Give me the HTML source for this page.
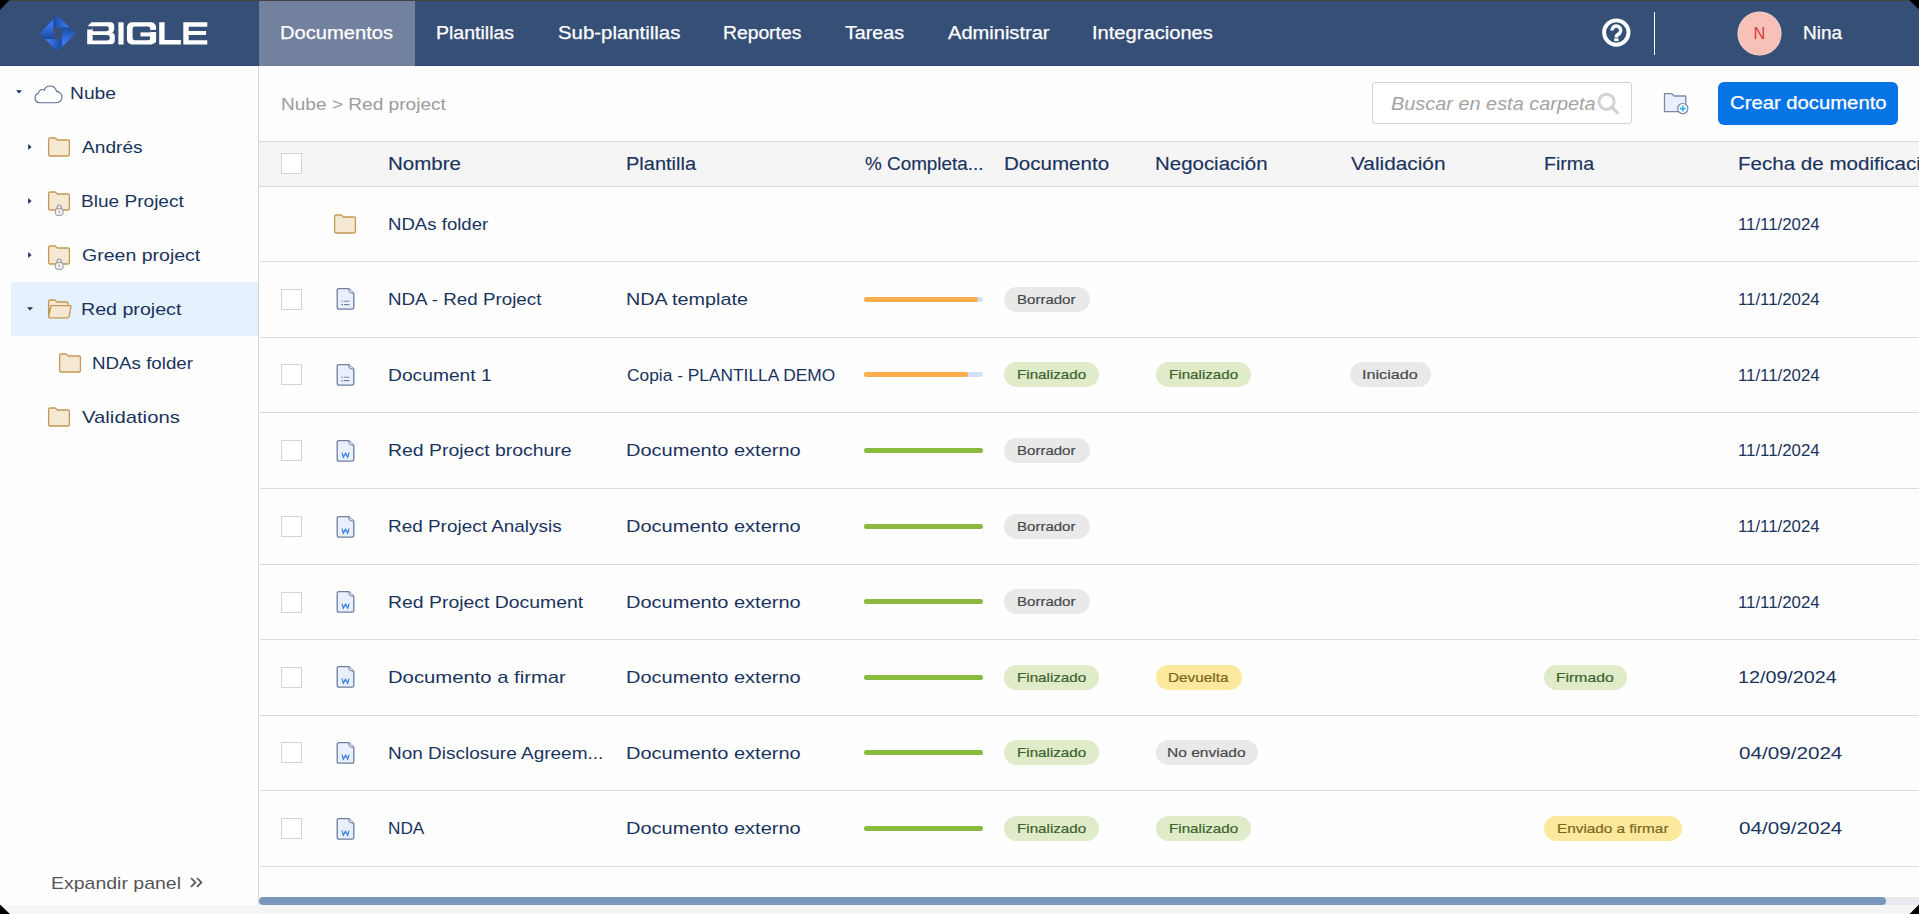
<!DOCTYPE html>
<html><head><meta charset="utf-8"><title>Bigle</title>
<style>
html,body{margin:0;padding:0;}
body{width:1919px;height:914px;overflow:hidden;position:relative;background:#fefefe;font-family:"Liberation Sans",sans-serif;}
.t{position:absolute;white-space:nowrap;}
.r{position:absolute;box-sizing:content-box;}
svg.r{display:block;overflow:visible;}
</style></head><body>
<div class="r" style="left:0px;top:0px;width:1919px;height:1px;background:#44453f;"></div>
<div class="r" style="left:0px;top:1px;width:1919px;height:65px;background:#364f77;"></div>
<div class="r" style="left:0px;top:65px;width:1919px;height:1px;background:#2e4671;"></div>
<div class="r" style="left:259px;top:1px;width:156px;height:65px;background:#71819e;"></div>
<svg class="r" style="left:38px;top:14px" width="40" height="40" viewBox="38 14 40 40">
<defs>
<clipPath id="dm"><rect x="-12.83" y="-12.83" width="25.66" height="25.66" rx="3.2" transform="translate(57.45 33.4) rotate(45)"/></clipPath>
<linearGradient id="gT" gradientUnits="userSpaceOnUse" x1="53.3" y1="0" x2="67" y2="0"><stop offset="0" stop-color="#174a9e"/><stop offset="1" stop-color="#3b76f2"/></linearGradient>
<linearGradient id="gL" gradientUnits="userSpaceOnUse" x1="0" y1="24" x2="0" y2="39"><stop offset="0" stop-color="#3b76f2"/><stop offset="1" stop-color="#174a9e"/></linearGradient>
<linearGradient id="gB" gradientUnits="userSpaceOnUse" x1="48" y1="0" x2="61.8" y2="0"><stop offset="0" stop-color="#3b76f2"/><stop offset="1" stop-color="#174a9e"/></linearGradient>
<linearGradient id="gR" gradientUnits="userSpaceOnUse" x1="0" y1="27.6" x2="0" y2="42"><stop offset="0" stop-color="#174a9e"/><stop offset="1" stop-color="#3b76f2"/></linearGradient>
</defs>
<g clip-path="url(#dm)">
<rect x="53.3" y="14" width="25" height="13.6" fill="url(#gT)"/>
<rect x="38" y="14" width="15.3" height="25" fill="url(#gL)"/>
<rect x="38" y="39" width="23.8" height="15" fill="url(#gB)"/>
<rect x="61.8" y="27.6" width="16.2" height="26.4" fill="url(#gR)"/>
</g></svg>
<svg class="r" style="left:80px;top:16px" width="135" height="34" viewBox="80 16 135 34">
<g fill="#fff">
<path d="M91.35 22.2 H110.2 Q114.2 22.2 114.2 26.2 V29.4 Q114.2 31.6 112.2 32.4 Q114.8 33.2 114.8 36 V40.2 Q114.8 44.3 110.8 44.3 H87.2 V29.45 H92.7 V26.35 H87.66 Z"/>
<rect x="118.4" y="22.3" width="5.2" height="22.2"/>
<rect x="126.95" y="22.2" width="29.1" height="22.3" rx="5"/>
<path d="M159.2 22.3 H164.6 V40.1 H180.9 V44.4 H159.2 Z"/>
<path d="M183.3 22.3 H207.3 V26.7 H188.7 V31 H206.1 V35.1 H188.7 V40.2 H207.3 V44.4 H183.3 Z"/>
</g>
<g fill="#364f77">
<path d="M92.7 26.35 H106.6 Q108.9 26.35 108.9 28.8 Q108.9 31.2 106.6 31.2 H92.7 Z"/>
<path d="M92.6 35.1 H107.2 Q109.8 35.1 109.8 37.75 Q109.8 40.4 107.2 40.4 H92.6 Z"/>
<rect x="132.6" y="26.6" width="17.7" height="13.6" rx="2.5"/>
<rect x="150.3" y="29.9" width="6.5" height="2.5"/>
</g>
<rect x="140.5" y="32.4" width="15.54" height="4" fill="#fff"/>
<rect x="150.3" y="32.4" width="5.74" height="10" fill="#fff"/>
</svg>
<div class="t" id="t0" style="left:280.00px;top:24.36px;font-size:18px;line-height:18px;color:#ffffff;transform:scaleX(1.1195);transform-origin:0 0;-webkit-text-stroke:0.25px #ffffff;">Documentos</div>
<div class="t" id="t1" style="left:435.70px;top:24.36px;font-size:18px;line-height:18px;color:#ffffff;transform:scaleX(1.0840);transform-origin:0 0;-webkit-text-stroke:0.25px #ffffff;">Plantillas</div>
<div class="t" id="t2" style="left:557.80px;top:24.36px;font-size:18px;line-height:18px;color:#ffffff;transform:scaleX(1.1327);transform-origin:0 0;-webkit-text-stroke:0.25px #ffffff;">Sub-plantillas</div>
<div class="t" id="t3" style="left:722.80px;top:24.36px;font-size:18px;line-height:18px;color:#ffffff;transform:scaleX(1.0717);transform-origin:0 0;-webkit-text-stroke:0.25px #ffffff;">Reportes</div>
<div class="t" id="t4" style="left:845.00px;top:24.36px;font-size:18px;line-height:18px;color:#ffffff;transform:scaleX(1.0921);transform-origin:0 0;-webkit-text-stroke:0.25px #ffffff;">Tareas</div>
<div class="t" id="t5" style="left:947.50px;top:24.36px;font-size:18px;line-height:18px;color:#ffffff;transform:scaleX(1.1151);transform-origin:0 0;-webkit-text-stroke:0.25px #ffffff;">Administrar</div>
<div class="t" id="t6" style="left:1092.30px;top:24.36px;font-size:18px;line-height:18px;color:#ffffff;transform:scaleX(1.1180);transform-origin:0 0;-webkit-text-stroke:0.25px #ffffff;">Integraciones</div>
<svg class="r" style="left:1600px;top:17px" width="32" height="32" viewBox="0 0 32 32">
<circle cx="16.3" cy="15.6" r="12.2" fill="none" stroke="#fff" stroke-width="3.9"/>
<path d="M11.9 13.4 A4.4 4.4 0 1 1 19.3 16.6 Q16.4 18.2 16.4 19.8 V20.4" fill="none" stroke="#fff" stroke-width="3.5"/>
<rect x="14.2" y="21.3" width="4.3" height="2.9" fill="#fff"/>
</svg>
<div class="r" style="left:1654px;top:12px;width:1px;height:43px;background:#ffffff;"></div>
<div class="r" style="left:1738.3px;top:12.1px;width:42.6px;height:42.6px;border-radius:50%;background:#f8c1b8;box-shadow:0 0 0 0.5px #f4e6e4;"></div>
<div class="t" id="t7" style="left:1753.50px;top:24.90px;font-size:16.3px;line-height:16.3px;color:#d43a40;">N</div>
<div class="t" id="t8" style="left:1802.80px;top:25.09px;font-size:17.5px;line-height:17.5px;color:#fff;transform:scaleX(1.0834);transform-origin:0 0;-webkit-text-stroke:0.25px #fff;">Nina</div>
<div class="r" style="left:258px;top:66px;width:1px;height:839px;background:#d6d6d6;"></div>
<div class="r" style="left:11px;top:282px;width:247px;height:54px;background:#e5f1fd;"></div>
<svg class="r" style="left:15.2px;top:89.3px" width="8" height="6" viewBox="0 0 8 6"><path d="M1 1.2 H7 L4 4.6Z" fill="#1a335d"/></svg>
<svg class="r" style="left:33px;top:82px" width="31" height="23" viewBox="0 0 31 23">
<path d="M6.6 20.8 A4.9 4.9 0 0 1 5.6 11.2 A3.6 3.6 0 0 1 11.2 8.2 A6.3 6.3 0 0 1 23.4 9.4 A5.7 5.7 0 0 1 23.2 20.8 Z" fill="#fff" stroke="#5a6d94" stroke-width="1.1" stroke-linejoin="round"/>
</svg>
<div class="t" id="t9" style="left:70.25px;top:85.01px;font-size:17px;line-height:17px;color:#1a335d;transform:scaleX(1.1331);transform-origin:0 0;">Nube</div>
<svg class="r" style="left:27px;top:142.7px" width="6" height="8" viewBox="0 0 6 8"><path d="M1.2 1 V7 L4.6 4Z" fill="#1a335d"/></svg>
<svg class="r" style="left:47px;top:136.8px" width="24" height="24" viewBox="0 0 24 24"><path d="M1.6 2.4 Q1.6 1 3 1 H8.2 L10.4 3 H21 Q22.4 3 22.4 4.4 V17.6 Q22.4 19 21 19 H3 Q1.6 19 1.6 17.6 Z" fill="#f6e9d4" stroke="#c39853" stroke-width="1.3" stroke-linejoin="round"/></svg>
<div class="t" id="t10" style="left:81.50px;top:138.61px;font-size:17px;line-height:17px;color:#1a335d;transform:scaleX(1.1244);transform-origin:0 0;">Andrés</div>
<svg class="r" style="left:27px;top:196.7px" width="6" height="8" viewBox="0 0 6 8"><path d="M1.2 1 V7 L4.6 4Z" fill="#1a335d"/></svg>
<svg class="r" style="left:47px;top:190.8px" width="24" height="24" viewBox="0 0 24 24"><path d="M1.6 2.4 Q1.6 1 3 1 H8.2 L10.4 3 H21 Q22.4 3 22.4 4.4 V17.6 Q22.4 19 21 19 H3 Q1.6 19 1.6 17.6 Z" fill="#f6e9d4" stroke="#c39853" stroke-width="1.3" stroke-linejoin="round"/><path d="M10 18 V16.4 Q10 14.2 12.2 14.2 Q14.4 14.2 14.4 16.4 V18" fill="#f3f3f3" stroke="#a3a3a3" stroke-width="1.2"/><rect x="8.3" y="17.4" width="7.8" height="7" rx="3.2" fill="#f1f1f1" stroke="#a3a3a3" stroke-width="1.1"/><rect x="11.7" y="19.6" width="1" height="2.2" fill="#8a8a8a"/></svg>
<div class="t" id="t11" style="left:80.50px;top:192.61px;font-size:17px;line-height:17px;color:#1a335d;transform:scaleX(1.1217);transform-origin:0 0;">Blue Project</div>
<svg class="r" style="left:27px;top:250.7px" width="6" height="8" viewBox="0 0 6 8"><path d="M1.2 1 V7 L4.6 4Z" fill="#1a335d"/></svg>
<svg class="r" style="left:47px;top:244.8px" width="24" height="24" viewBox="0 0 24 24"><path d="M1.6 2.4 Q1.6 1 3 1 H8.2 L10.4 3 H21 Q22.4 3 22.4 4.4 V17.6 Q22.4 19 21 19 H3 Q1.6 19 1.6 17.6 Z" fill="#f6e9d4" stroke="#c39853" stroke-width="1.3" stroke-linejoin="round"/><path d="M10 18 V16.4 Q10 14.2 12.2 14.2 Q14.4 14.2 14.4 16.4 V18" fill="#f3f3f3" stroke="#a3a3a3" stroke-width="1.2"/><rect x="8.3" y="17.4" width="7.8" height="7" rx="3.2" fill="#f1f1f1" stroke="#a3a3a3" stroke-width="1.1"/><rect x="11.7" y="19.6" width="1" height="2.2" fill="#8a8a8a"/></svg>
<div class="t" id="t12" style="left:81.50px;top:246.61px;font-size:17px;line-height:17px;color:#1a335d;transform:scaleX(1.1484);transform-origin:0 0;">Green project</div>
<svg class="r" style="left:26px;top:305.5px" width="8" height="6" viewBox="0 0 8 6"><path d="M1 1.2 H7 L4 4.6Z" fill="#1a335d"/></svg>
<svg class="r" style="left:47px;top:298.5px" width="26" height="22" viewBox="0 0 26 22"><path d="M1.6 2.4 Q1.6 1 3 1 H7.8 L10 3 H19.6 Q21 3 21 4.4 V7 H3.8 L1.6 17.4 Z" fill="#f6e9d4" stroke="#c39853" stroke-width="1.3" stroke-linejoin="round"/><path d="M4.2 6.6 H23.4 Q24.2 6.6 24 7.6 L22 17.6 Q21.8 18.8 20.6 18.8 H2.8 Q1.6 18.8 1.8 17.6 L3.8 7.4 Q4 6.6 4.2 6.6 Z" fill="#f6e9d4" stroke="#c39853" stroke-width="1.3" stroke-linejoin="round"/></svg>
<div class="t" id="t13" style="left:80.50px;top:300.61px;font-size:17px;line-height:17px;color:#1a335d;transform:scaleX(1.1541);transform-origin:0 0;">Red project</div>
<svg class="r" style="left:58px;top:352.8px" width="24" height="24" viewBox="0 0 24 24"><path d="M1.6 2.4 Q1.6 1 3 1 H8.2 L10.4 3 H21 Q22.4 3 22.4 4.4 V17.6 Q22.4 19 21 19 H3 Q1.6 19 1.6 17.6 Z" fill="#f6e9d4" stroke="#c39853" stroke-width="1.3" stroke-linejoin="round"/></svg>
<div class="t" id="t14" style="left:91.50px;top:354.61px;font-size:17px;line-height:17px;color:#1a335d;transform:scaleX(1.1024);transform-origin:0 0;">NDAs folder</div>
<svg class="r" style="left:47px;top:406.8px" width="24" height="24" viewBox="0 0 24 24"><path d="M1.6 2.4 Q1.6 1 3 1 H8.2 L10.4 3 H21 Q22.4 3 22.4 4.4 V17.6 Q22.4 19 21 19 H3 Q1.6 19 1.6 17.6 Z" fill="#f6e9d4" stroke="#c39853" stroke-width="1.3" stroke-linejoin="round"/></svg>
<div class="t" id="t15" style="left:81.50px;top:408.61px;font-size:17px;line-height:17px;color:#1a335d;transform:scaleX(1.1953);transform-origin:0 0;">Validations</div>
<div class="t" id="t16" style="left:50.60px;top:875.41px;font-size:17px;line-height:17px;color:#555555;transform:scaleX(1.1466);transform-origin:0 0;">Expandir panel</div>
<svg class="r" style="left:188px;top:874px" width="18" height="16" viewBox="0 0 18 16">
<path d="M3 4 L7.4 8.4 L3 12.8 M9 4 L13.4 8.4 L9 12.8" fill="none" stroke="#555" stroke-width="1.7" stroke-linejoin="miter"/>
</svg>
<div class="r" style="left:0px;top:905px;width:1919px;height:9px;background:#f5f5f5;"></div>
<div class="r" style="left:259px;top:897px;width:1660px;height:8px;background:#e7e9ee;border-radius:4px 0 0 4px"></div>
<div class="r" style="left:259px;top:897px;width:1627px;height:8px;background:#7996bd;border-radius:4px"></div>
<div class="t" id="t17" style="left:280.70px;top:96.36px;font-size:17px;line-height:17px;color:#9b9b9b;transform:scaleX(1.1216);transform-origin:0 0;">Nube &gt; Red project</div>
<div class="r" style="left:1372px;top:82px;width:258px;height:40px;border:1px solid #d2d2d2;border-radius:3px;background:#fff"></div>
<div class="t" id="t18" style="left:1390.80px;top:96.29px;font-size:17.5px;line-height:17.5px;color:#a3a3a3;font-style:italic;transform:scaleX(1.1369);transform-origin:0 0;">Buscar en esta carpeta</div>
<svg class="r" style="left:1594px;top:89px" width="30" height="30" viewBox="0 0 30 30">
<circle cx="12.6" cy="12.8" r="7.6" fill="none" stroke="#d3d3d3" stroke-width="3"/>
<path d="M18.2 18.4 L23.6 23.8" stroke="#d3d3d3" stroke-width="3.2" stroke-linecap="round"/>
</svg>
<svg class="r" style="left:1660px;top:89px" width="32" height="28" viewBox="0 0 32 28">
<path d="M4.5 4.6 H11.6 L14.2 7 H25.2 Q25.8 7 25.8 7.6 V22.6 H4.5 Z" fill="#e9f0fc" stroke="#7a89a8" stroke-width="1.3" stroke-linejoin="round"/>
<circle cx="22.8" cy="19.6" r="5.1" fill="#fff" stroke="#7a89a8" stroke-width="1.2"/>
<path d="M22.8 16.6 V22.6 M19.8 19.6 H25.8" stroke="#24b3e6" stroke-width="1.6"/>
</svg>
<div class="r" style="left:1718px;top:82px;width:180px;height:43px;border-radius:6px;background:#0774e6"></div>
<div class="t" id="t19" style="left:1730.30px;top:95.09px;font-size:17.5px;line-height:17.5px;color:#ffffff;transform:scaleX(1.1578);transform-origin:0 0;-webkit-text-stroke:0.25px #ffffff;">Crear documento</div>
<div class="r" style="left:259px;top:141px;width:1660px;height:1px;background:#d9d9d9;"></div>
<div class="r" style="left:259px;top:142px;width:1660px;height:44px;background:#f5f5f5;"></div>
<div class="r" style="left:259px;top:186px;width:1660px;height:1px;background:#d9d9d9;"></div>
<div class="r" style="left:281px;top:153px;width:19px;height:19px;border:1px solid #d4d4d4;background:#fff"></div>
<div class="t" id="t20" style="left:388.20px;top:156.39px;font-size:17.5px;line-height:17.5px;color:#1a335d;transform:scaleX(1.1734);transform-origin:0 0;-webkit-text-stroke:0.15px #1a335d;">Nombre</div>
<div class="t" id="t21" style="left:626.30px;top:156.39px;font-size:17.5px;line-height:17.5px;color:#1a335d;transform:scaleX(1.1428);transform-origin:0 0;-webkit-text-stroke:0.15px #1a335d;">Plantilla</div>
<div class="t" id="t22" style="left:864.60px;top:156.39px;font-size:17.5px;line-height:17.5px;color:#1a335d;transform:scaleX(1.0785);transform-origin:0 0;-webkit-text-stroke:0.15px #1a335d;">% Completa...</div>
<div class="t" id="t23" style="left:1003.60px;top:156.39px;font-size:17.5px;line-height:17.5px;color:#1a335d;transform:scaleX(1.1748);transform-origin:0 0;-webkit-text-stroke:0.15px #1a335d;">Documento</div>
<div class="t" id="t24" style="left:1154.80px;top:156.39px;font-size:17.5px;line-height:17.5px;color:#1a335d;transform:scaleX(1.1684);transform-origin:0 0;-webkit-text-stroke:0.15px #1a335d;">Negociación</div>
<div class="t" id="t25" style="left:1350.60px;top:156.39px;font-size:17.5px;line-height:17.5px;color:#1a335d;transform:scaleX(1.1891);transform-origin:0 0;-webkit-text-stroke:0.15px #1a335d;">Validación</div>
<div class="t" id="t26" style="left:1543.70px;top:156.39px;font-size:17.5px;line-height:17.5px;color:#1a335d;transform:scaleX(1.1209);transform-origin:0 0;-webkit-text-stroke:0.15px #1a335d;">Firma</div>
<div class="t" id="t27" style="left:1737.90px;top:156.39px;font-size:17.5px;line-height:17.5px;color:#1a335d;transform:scaleX(1.1750);transform-origin:0 0;-webkit-text-stroke:0.15px #1a335d;">Fecha de modificación</div>
<div class="r" style="left:260px;top:261px;width:1659px;height:1px;background:#dcdcdc;"></div>
<div class="r" style="left:260px;top:337px;width:1659px;height:1px;background:#dcdcdc;"></div>
<div class="r" style="left:260px;top:412px;width:1659px;height:1px;background:#dcdcdc;"></div>
<div class="r" style="left:260px;top:488px;width:1659px;height:1px;background:#dcdcdc;"></div>
<div class="r" style="left:260px;top:564px;width:1659px;height:1px;background:#dcdcdc;"></div>
<div class="r" style="left:260px;top:639px;width:1659px;height:1px;background:#dcdcdc;"></div>
<div class="r" style="left:260px;top:715px;width:1659px;height:1px;background:#dcdcdc;"></div>
<div class="r" style="left:260px;top:790px;width:1659px;height:1px;background:#dcdcdc;"></div>
<div class="r" style="left:260px;top:866px;width:1659px;height:1px;background:#dcdcdc;"></div>
<svg class="r" style="left:333px;top:213.5px" width="24" height="24" viewBox="0 0 24 24"><path d="M1.6 2.4 Q1.6 1 3 1 H8.2 L10.4 3 H21 Q22.4 3 22.4 4.4 V17.6 Q22.4 19 21 19 H3 Q1.6 19 1.6 17.6 Z" fill="#f6e9d4" stroke="#c39853" stroke-width="1.3" stroke-linejoin="round"/></svg>
<div class="t" id="t28" style="left:388.00px;top:215.91px;font-size:17px;line-height:17px;color:#1a335d;transform:scaleX(1.0937);transform-origin:0 0;">NDAs folder</div>
<div class="t" id="t29" style="left:1738.20px;top:215.91px;font-size:17px;line-height:17px;color:#1a335d;transform:scaleX(0.9888);transform-origin:0 0;">11/11/2024</div>
<div class="r" style="left:281px;top:289px;width:19px;height:19px;border:1px solid #d4d4d4;background:#fff"></div>
<svg class="r" style="left:335px;top:286px" width="22" height="25" viewBox="0 0 22 25"><path d="M3.9 2.6 H13.8 L18.8 7.2 V21.4 Q18.8 23.2 17 23.2 H3.9 Q2.2 23.2 2.2 21.4 V4.4 Q2.2 2.6 3.9 2.6 Z" fill="#e9f0fc" stroke="#6e7fa2" stroke-width="1.3" stroke-linejoin="round"/><path d="M13.8 2.6 Q13.6 7.2 18.8 7.2" fill="#fff" stroke="#6e7fa2" stroke-width="1.1"/><rect x="6.4" y="14.6" width="1.6" height="1.4" fill="#9aa6c0"/><rect x="9" y="14.6" width="5.4" height="1.4" fill="#9aa6c0"/><rect x="6.4" y="18" width="1.6" height="1.2" fill="#6e7fa2"/><rect x="9" y="18" width="5.4" height="1.2" fill="#6e7fa2"/></svg>
<div class="t" id="t30" style="left:388.00px;top:291.41px;font-size:17px;line-height:17px;color:#1a335d;transform:scaleX(1.1043);transform-origin:0 0;">NDA - Red Project</div>
<div class="t" id="t31" style="left:625.50px;top:291.41px;font-size:17px;line-height:17px;color:#1a335d;transform:scaleX(1.1623);transform-origin:0 0;">NDA template</div>
<div class="r" style="left:864px;top:297px;width:119px;height:5px;border-radius:3px;background:#d3e1f6"></div>
<div class="r" style="left:864px;top:297px;width:114.3px;height:5px;border-radius:3px;background:#fdae4c"></div>
<div class="r" style="left:1004px;top:287px;width:86px;height:25px;border-radius:13px;background:#e9e9e9"></div><div class="t" id="t32" style="left:1017.00px;top:293.14px;font-size:13.3px;line-height:13.3px;color:#4a4a4a;transform:scaleX(1.1305);transform-origin:0 0;-webkit-text-stroke:0.2px #4a4a4a;">Borrador</div>
<div class="t" id="t33" style="left:1738.20px;top:291.41px;font-size:17px;line-height:17px;color:#1a335d;transform:scaleX(0.9888);transform-origin:0 0;">11/11/2024</div>
<div class="r" style="left:281px;top:364px;width:19px;height:19px;border:1px solid #d4d4d4;background:#fff"></div>
<svg class="r" style="left:335px;top:362px" width="22" height="25" viewBox="0 0 22 25"><path d="M3.9 2.6 H13.8 L18.8 7.2 V21.4 Q18.8 23.2 17 23.2 H3.9 Q2.2 23.2 2.2 21.4 V4.4 Q2.2 2.6 3.9 2.6 Z" fill="#e9f0fc" stroke="#6e7fa2" stroke-width="1.3" stroke-linejoin="round"/><path d="M13.8 2.6 Q13.6 7.2 18.8 7.2" fill="#fff" stroke="#6e7fa2" stroke-width="1.1"/><rect x="6.4" y="14.6" width="1.6" height="1.4" fill="#9aa6c0"/><rect x="9" y="14.6" width="5.4" height="1.4" fill="#9aa6c0"/><rect x="6.4" y="18" width="1.6" height="1.2" fill="#6e7fa2"/><rect x="9" y="18" width="5.4" height="1.2" fill="#6e7fa2"/></svg>
<div class="t" id="t34" style="left:388.00px;top:366.91px;font-size:17px;line-height:17px;color:#1a335d;transform:scaleX(1.1308);transform-origin:0 0;">Document 1</div>
<div class="t" id="t35" style="left:626.50px;top:366.91px;font-size:17px;line-height:17px;color:#1a335d;transform:scaleX(1.0201);transform-origin:0 0;">Copia - PLANTILLA DEMO</div>
<div class="r" style="left:864px;top:372px;width:119px;height:5px;border-radius:3px;background:#d3e1f6"></div>
<div class="r" style="left:864px;top:372px;width:104px;height:5px;border-radius:3px;background:#fdae4c"></div>
<div class="r" style="left:1004px;top:362px;width:95px;height:25px;border-radius:13px;background:#dfebc9"></div><div class="t" id="t36" style="left:1016.70px;top:368.14px;font-size:13.3px;line-height:13.3px;color:#3d632c;transform:scaleX(1.1416);transform-origin:0 0;-webkit-text-stroke:0.2px #3d632c;">Finalizado</div>
<div class="r" style="left:1156px;top:362px;width:95px;height:25px;border-radius:13px;background:#dfebc9"></div><div class="t" id="t37" style="left:1168.70px;top:368.14px;font-size:13.3px;line-height:13.3px;color:#3d632c;transform:scaleX(1.1416);transform-origin:0 0;-webkit-text-stroke:0.2px #3d632c;">Finalizado</div>
<div class="r" style="left:1350px;top:362px;width:80.5px;height:25px;border-radius:13px;background:#e9e9e9"></div><div class="t" id="t38" style="left:1362.25px;top:368.14px;font-size:13.3px;line-height:13.3px;color:#4a4a4a;transform:scaleX(1.2152);transform-origin:0 0;-webkit-text-stroke:0.2px #4a4a4a;">Iniciado</div>
<div class="t" id="t39" style="left:1738.20px;top:366.91px;font-size:17px;line-height:17px;color:#1a335d;transform:scaleX(0.9888);transform-origin:0 0;">11/11/2024</div>
<div class="r" style="left:281px;top:440px;width:19px;height:19px;border:1px solid #d4d4d4;background:#fff"></div>
<svg class="r" style="left:335px;top:438px" width="22" height="25" viewBox="0 0 22 25"><path d="M3.9 2.6 H13.8 L18.8 7.2 V21.4 Q18.8 23.2 17 23.2 H3.9 Q2.2 23.2 2.2 21.4 V4.4 Q2.2 2.6 3.9 2.6 Z" fill="#e9f0fc" stroke="#6e7fa2" stroke-width="1.3" stroke-linejoin="round"/><path d="M13.8 2.6 Q13.6 7.2 18.8 7.2" fill="#fff" stroke="#6e7fa2" stroke-width="1.1"/><path d="M7 14.6 L8.3 19.2 L10.5 15.2 L12.7 19.2 L14 14.6" fill="none" stroke="#2f7fe0" stroke-width="1.2"/></svg>
<div class="t" id="t40" style="left:388.00px;top:442.41px;font-size:17px;line-height:17px;color:#1a335d;transform:scaleX(1.1433);transform-origin:0 0;">Red Project brochure</div>
<div class="t" id="t41" style="left:625.50px;top:442.41px;font-size:17px;line-height:17px;color:#1a335d;transform:scaleX(1.1776);transform-origin:0 0;">Documento externo</div>
<div class="r" style="left:864px;top:448px;width:119px;height:5px;border-radius:3px;background:#d3e1f6"></div>
<div class="r" style="left:864px;top:448px;width:119px;height:5px;border-radius:3px;background:#8aba3e"></div>
<div class="r" style="left:1004px;top:438px;width:86px;height:25px;border-radius:13px;background:#e9e9e9"></div><div class="t" id="t42" style="left:1017.00px;top:444.14px;font-size:13.3px;line-height:13.3px;color:#4a4a4a;transform:scaleX(1.1305);transform-origin:0 0;-webkit-text-stroke:0.2px #4a4a4a;">Borrador</div>
<div class="t" id="t43" style="left:1738.20px;top:442.41px;font-size:17px;line-height:17px;color:#1a335d;transform:scaleX(0.9888);transform-origin:0 0;">11/11/2024</div>
<div class="r" style="left:281px;top:516px;width:19px;height:19px;border:1px solid #d4d4d4;background:#fff"></div>
<svg class="r" style="left:335px;top:514px" width="22" height="25" viewBox="0 0 22 25"><path d="M3.9 2.6 H13.8 L18.8 7.2 V21.4 Q18.8 23.2 17 23.2 H3.9 Q2.2 23.2 2.2 21.4 V4.4 Q2.2 2.6 3.9 2.6 Z" fill="#e9f0fc" stroke="#6e7fa2" stroke-width="1.3" stroke-linejoin="round"/><path d="M13.8 2.6 Q13.6 7.2 18.8 7.2" fill="#fff" stroke="#6e7fa2" stroke-width="1.1"/><path d="M7 14.6 L8.3 19.2 L10.5 15.2 L12.7 19.2 L14 14.6" fill="none" stroke="#2f7fe0" stroke-width="1.2"/></svg>
<div class="t" id="t44" style="left:388.00px;top:518.41px;font-size:17px;line-height:17px;color:#1a335d;transform:scaleX(1.1137);transform-origin:0 0;">Red Project Analysis</div>
<div class="t" id="t45" style="left:625.50px;top:518.41px;font-size:17px;line-height:17px;color:#1a335d;transform:scaleX(1.1776);transform-origin:0 0;">Documento externo</div>
<div class="r" style="left:864px;top:524px;width:119px;height:5px;border-radius:3px;background:#d3e1f6"></div>
<div class="r" style="left:864px;top:524px;width:119px;height:5px;border-radius:3px;background:#8aba3e"></div>
<div class="r" style="left:1004px;top:514px;width:86px;height:25px;border-radius:13px;background:#e9e9e9"></div><div class="t" id="t46" style="left:1017.00px;top:520.14px;font-size:13.3px;line-height:13.3px;color:#4a4a4a;transform:scaleX(1.1305);transform-origin:0 0;-webkit-text-stroke:0.2px #4a4a4a;">Borrador</div>
<div class="t" id="t47" style="left:1738.20px;top:518.41px;font-size:17px;line-height:17px;color:#1a335d;transform:scaleX(0.9888);transform-origin:0 0;">11/11/2024</div>
<div class="r" style="left:281px;top:592px;width:19px;height:19px;border:1px solid #d4d4d4;background:#fff"></div>
<svg class="r" style="left:335px;top:589px" width="22" height="25" viewBox="0 0 22 25"><path d="M3.9 2.6 H13.8 L18.8 7.2 V21.4 Q18.8 23.2 17 23.2 H3.9 Q2.2 23.2 2.2 21.4 V4.4 Q2.2 2.6 3.9 2.6 Z" fill="#e9f0fc" stroke="#6e7fa2" stroke-width="1.3" stroke-linejoin="round"/><path d="M13.8 2.6 Q13.6 7.2 18.8 7.2" fill="#fff" stroke="#6e7fa2" stroke-width="1.1"/><path d="M7 14.6 L8.3 19.2 L10.5 15.2 L12.7 19.2 L14 14.6" fill="none" stroke="#2f7fe0" stroke-width="1.2"/></svg>
<div class="t" id="t48" style="left:388.00px;top:593.91px;font-size:17px;line-height:17px;color:#1a335d;transform:scaleX(1.1415);transform-origin:0 0;">Red Project Document</div>
<div class="t" id="t49" style="left:625.50px;top:593.91px;font-size:17px;line-height:17px;color:#1a335d;transform:scaleX(1.1776);transform-origin:0 0;">Documento externo</div>
<div class="r" style="left:864px;top:599px;width:119px;height:5px;border-radius:3px;background:#d3e1f6"></div>
<div class="r" style="left:864px;top:599px;width:119px;height:5px;border-radius:3px;background:#8aba3e"></div>
<div class="r" style="left:1004px;top:589px;width:86px;height:25px;border-radius:13px;background:#e9e9e9"></div><div class="t" id="t50" style="left:1017.00px;top:595.14px;font-size:13.3px;line-height:13.3px;color:#4a4a4a;transform:scaleX(1.1305);transform-origin:0 0;-webkit-text-stroke:0.2px #4a4a4a;">Borrador</div>
<div class="t" id="t51" style="left:1738.20px;top:593.91px;font-size:17px;line-height:17px;color:#1a335d;transform:scaleX(0.9888);transform-origin:0 0;">11/11/2024</div>
<div class="r" style="left:281px;top:667px;width:19px;height:19px;border:1px solid #d4d4d4;background:#fff"></div>
<svg class="r" style="left:335px;top:664px" width="22" height="25" viewBox="0 0 22 25"><path d="M3.9 2.6 H13.8 L18.8 7.2 V21.4 Q18.8 23.2 17 23.2 H3.9 Q2.2 23.2 2.2 21.4 V4.4 Q2.2 2.6 3.9 2.6 Z" fill="#e9f0fc" stroke="#6e7fa2" stroke-width="1.3" stroke-linejoin="round"/><path d="M13.8 2.6 Q13.6 7.2 18.8 7.2" fill="#fff" stroke="#6e7fa2" stroke-width="1.1"/><path d="M7 14.6 L8.3 19.2 L10.5 15.2 L12.7 19.2 L14 14.6" fill="none" stroke="#2f7fe0" stroke-width="1.2"/></svg>
<div class="t" id="t52" style="left:388.00px;top:669.41px;font-size:17px;line-height:17px;color:#1a335d;transform:scaleX(1.1910);transform-origin:0 0;">Documento a firmar</div>
<div class="t" id="t53" style="left:625.50px;top:669.41px;font-size:17px;line-height:17px;color:#1a335d;transform:scaleX(1.1776);transform-origin:0 0;">Documento externo</div>
<div class="r" style="left:864px;top:675px;width:119px;height:5px;border-radius:3px;background:#d3e1f6"></div>
<div class="r" style="left:864px;top:675px;width:119px;height:5px;border-radius:3px;background:#8aba3e"></div>
<div class="r" style="left:1004px;top:665px;width:95px;height:25px;border-radius:13px;background:#dfebc9"></div><div class="t" id="t54" style="left:1016.70px;top:671.14px;font-size:13.3px;line-height:13.3px;color:#3d632c;transform:scaleX(1.1416);transform-origin:0 0;-webkit-text-stroke:0.2px #3d632c;">Finalizado</div>
<div class="r" style="left:1156px;top:665px;width:85.5px;height:25px;border-radius:13px;background:#fde99c"></div><div class="t" id="t55" style="left:1167.75px;top:671.14px;font-size:13.3px;line-height:13.3px;color:#7a6821;transform:scaleX(1.1520);transform-origin:0 0;-webkit-text-stroke:0.2px #7a6821;">Devuelta</div>
<div class="r" style="left:1544px;top:665px;width:82.6px;height:25px;border-radius:13px;background:#dfebc9"></div><div class="t" id="t56" style="left:1556.30px;top:671.14px;font-size:13.3px;line-height:13.3px;color:#3d632c;transform:scaleX(1.1822);transform-origin:0 0;-webkit-text-stroke:0.2px #3d632c;">Firmado</div>
<div class="t" id="t57" style="left:1738.20px;top:669.41px;font-size:17px;line-height:17px;color:#1a335d;transform:scaleX(1.1599);transform-origin:0 0;">12/09/2024</div>
<div class="r" style="left:281px;top:742px;width:19px;height:19px;border:1px solid #d4d4d4;background:#fff"></div>
<svg class="r" style="left:335px;top:740px" width="22" height="25" viewBox="0 0 22 25"><path d="M3.9 2.6 H13.8 L18.8 7.2 V21.4 Q18.8 23.2 17 23.2 H3.9 Q2.2 23.2 2.2 21.4 V4.4 Q2.2 2.6 3.9 2.6 Z" fill="#e9f0fc" stroke="#6e7fa2" stroke-width="1.3" stroke-linejoin="round"/><path d="M13.8 2.6 Q13.6 7.2 18.8 7.2" fill="#fff" stroke="#6e7fa2" stroke-width="1.1"/><path d="M7 14.6 L8.3 19.2 L10.5 15.2 L12.7 19.2 L14 14.6" fill="none" stroke="#2f7fe0" stroke-width="1.2"/></svg>
<div class="t" id="t58" style="left:388.00px;top:744.91px;font-size:17px;line-height:17px;color:#1a335d;transform:scaleX(1.1169);transform-origin:0 0;">Non Disclosure Agreem...</div>
<div class="t" id="t59" style="left:625.50px;top:744.91px;font-size:17px;line-height:17px;color:#1a335d;transform:scaleX(1.1776);transform-origin:0 0;">Documento externo</div>
<div class="r" style="left:864px;top:750px;width:119px;height:5px;border-radius:3px;background:#d3e1f6"></div>
<div class="r" style="left:864px;top:750px;width:119px;height:5px;border-radius:3px;background:#8aba3e"></div>
<div class="r" style="left:1004px;top:740px;width:95px;height:25px;border-radius:13px;background:#dfebc9"></div><div class="t" id="t60" style="left:1016.70px;top:746.14px;font-size:13.3px;line-height:13.3px;color:#3d632c;transform:scaleX(1.1416);transform-origin:0 0;-webkit-text-stroke:0.2px #3d632c;">Finalizado</div>
<div class="r" style="left:1156px;top:740px;width:101.6px;height:25px;border-radius:13px;background:#e9e9e9"></div><div class="t" id="t61" style="left:1167.30px;top:746.14px;font-size:13.3px;line-height:13.3px;color:#4a4a4a;transform:scaleX(1.1689);transform-origin:0 0;-webkit-text-stroke:0.2px #4a4a4a;">No enviado</div>
<div class="t" id="t62" style="left:1739.20px;top:744.91px;font-size:17px;line-height:17px;color:#1a335d;transform:scaleX(1.2147);transform-origin:0 0;">04/09/2024</div>
<div class="r" style="left:281px;top:818px;width:19px;height:19px;border:1px solid #d4d4d4;background:#fff"></div>
<svg class="r" style="left:335px;top:816px" width="22" height="25" viewBox="0 0 22 25"><path d="M3.9 2.6 H13.8 L18.8 7.2 V21.4 Q18.8 23.2 17 23.2 H3.9 Q2.2 23.2 2.2 21.4 V4.4 Q2.2 2.6 3.9 2.6 Z" fill="#e9f0fc" stroke="#6e7fa2" stroke-width="1.3" stroke-linejoin="round"/><path d="M13.8 2.6 Q13.6 7.2 18.8 7.2" fill="#fff" stroke="#6e7fa2" stroke-width="1.1"/><path d="M7 14.6 L8.3 19.2 L10.5 15.2 L12.7 19.2 L14 14.6" fill="none" stroke="#2f7fe0" stroke-width="1.2"/></svg>
<div class="t" id="t63" style="left:388.00px;top:820.41px;font-size:17px;line-height:17px;color:#1a335d;transform:scaleX(1.0126);transform-origin:0 0;">NDA</div>
<div class="t" id="t64" style="left:625.50px;top:820.41px;font-size:17px;line-height:17px;color:#1a335d;transform:scaleX(1.1776);transform-origin:0 0;">Documento externo</div>
<div class="r" style="left:864px;top:826px;width:119px;height:5px;border-radius:3px;background:#d3e1f6"></div>
<div class="r" style="left:864px;top:826px;width:119px;height:5px;border-radius:3px;background:#8aba3e"></div>
<div class="r" style="left:1004px;top:816px;width:95px;height:25px;border-radius:13px;background:#dfebc9"></div><div class="t" id="t65" style="left:1016.70px;top:822.14px;font-size:13.3px;line-height:13.3px;color:#3d632c;transform:scaleX(1.1416);transform-origin:0 0;-webkit-text-stroke:0.2px #3d632c;">Finalizado</div>
<div class="r" style="left:1156px;top:816px;width:95px;height:25px;border-radius:13px;background:#dfebc9"></div><div class="t" id="t66" style="left:1168.70px;top:822.14px;font-size:13.3px;line-height:13.3px;color:#3d632c;transform:scaleX(1.1416);transform-origin:0 0;-webkit-text-stroke:0.2px #3d632c;">Finalizado</div>
<div class="r" style="left:1544px;top:816px;width:138px;height:25px;border-radius:13px;background:#fde99c"></div><div class="t" id="t67" style="left:1556.50px;top:822.14px;font-size:13.3px;line-height:13.3px;color:#7a6821;transform:scaleX(1.1516);transform-origin:0 0;-webkit-text-stroke:0.2px #7a6821;">Enviado a firmar</div>
<div class="t" id="t68" style="left:1739.20px;top:820.41px;font-size:17px;line-height:17px;color:#1a335d;transform:scaleX(1.2147);transform-origin:0 0;">04/09/2024</div>
<svg class="r" style="left:0;top:0" width="1919" height="914" viewBox="0 0 1919 914"><path d="M0 0 H9.5 L0 10 Z M1919 0 H1909 L1919 9.5 Z M0 914 V904.5 L10 914 Z M1919 914 V904.5 L1909.5 914 Z" fill="#000"/></svg>
</body></html>
